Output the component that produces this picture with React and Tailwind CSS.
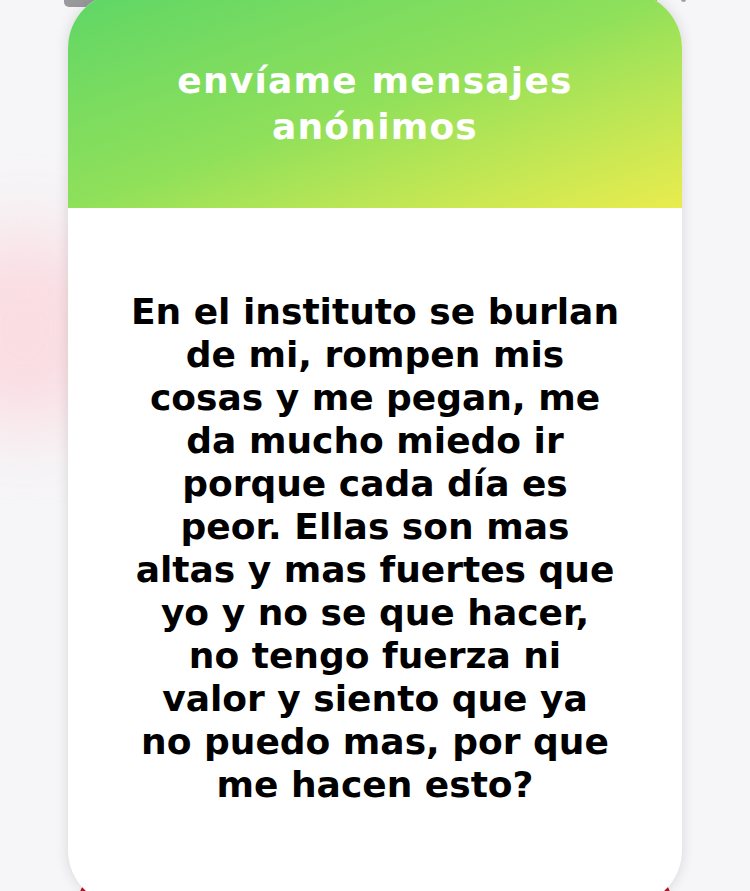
export default function App() {
  const lines = [
    "En el instituto se burlan",
    "de mi, rompen mis",
    "cosas y me pegan, me",
    "da mucho miedo ir",
    "porque cada día es",
    "peor. Ellas son mas",
    "altas y mas fuertes que",
    "yo y no se que hacer,",
    "no tengo fuerza ni",
    "valor y siento que ya",
    "no puedo mas, por que",
    "me hacen esto?",
  ];
  return (
    <div
      className="relative w-[750px] h-[891px] overflow-hidden bg-[#f6f5f7]"
      style={{ fontFamily: "'DejaVu Sans', 'Liberation Sans', sans-serif" }}
    >
      {/* decorative elements behind card */}
      <div className="absolute left-[64px] top-[-10px] w-[38px] h-[17px] rounded-[5px] bg-[#9a999c]" />
      <div className="absolute left-[652px] top-[-3px] w-[5px] h-[5px] rounded-full bg-[#a09fa3]" />
      <div className="absolute left-[681px] top-[-3px] w-[5px] h-[5px] rounded-full bg-[#a09fa3]" />
      <div className="absolute left-[-60px] top-[230px] w-[170px] h-[200px] rounded-full bg-[#fbd6dd] blur-[36px] opacity-80" />
      <div className="absolute left-[80px] top-[882px] w-[590px] h-[30px] rounded-[12px] bg-[#b3152a]" />

      <div className="relative flex justify-center">
        <div className="mt-[-8px] w-[614px] h-[914px] rounded-[56px] overflow-hidden bg-white shadow-[0_0_14px_rgba(0,0,0,0.13)] flex flex-col">
          <div className="h-[216px] shrink-0 bg-linear-to-br from-[#5cd666] via-[#8fe05a] to-[#e9ec4d] flex flex-col items-center pt-[66px]">
            <div className="text-white font-bold text-[36px] leading-[46px] text-center tracking-[1.2px]">
              <div>envíame mensajes</div>
              <div>anónimos</div>
            </div>
          </div>
          <div className="flex flex-col items-center pt-[82px] text-black font-bold text-[36px] leading-[43px] text-center">
            {lines.map((l, i) => (
              <div key={i}>{l}</div>
            ))}
          </div>
        </div>
      </div>
    </div>
  );
}
